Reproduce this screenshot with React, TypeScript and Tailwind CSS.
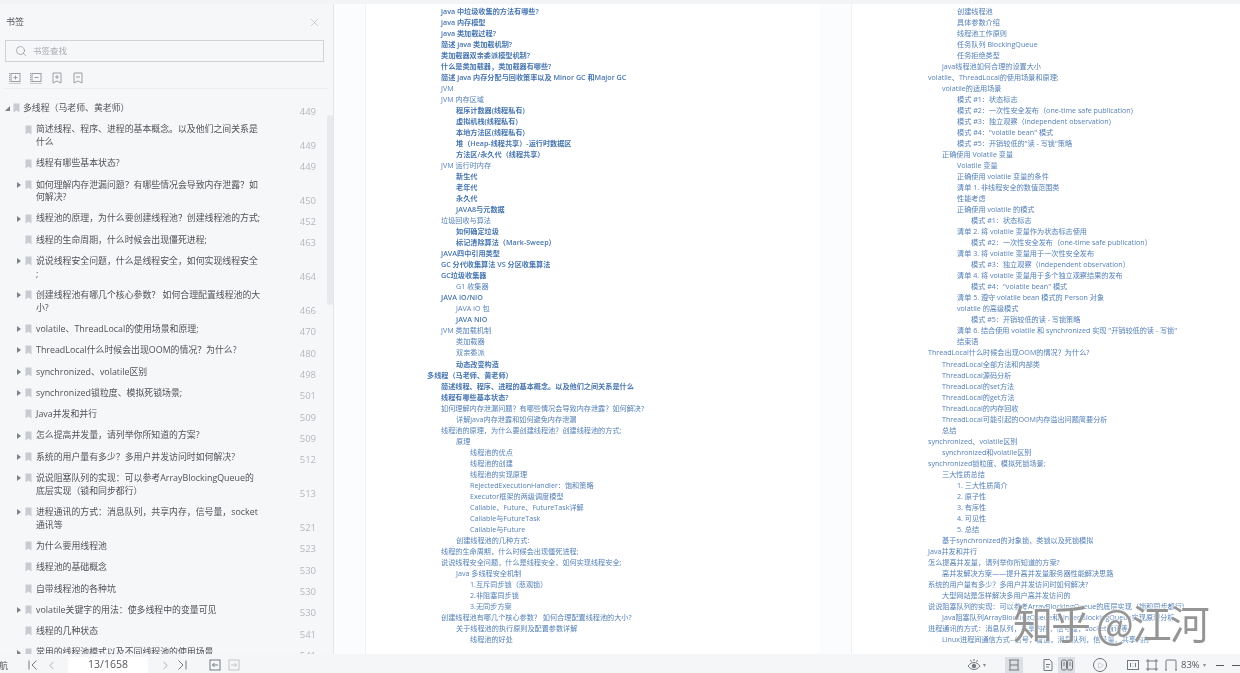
import React from "react";
import { ChevronLeft, ChevronRight, Play, Search, X } from "lucide-react";

const cjk = "font-['Open_Sans','Noto_Sans_CJK_SC',sans-serif]";

type Line = [number, string, boolean?];

const pageOne: Line[] = [
    [1, "java 中垃圾收集的方法有哪些?", true],
    [1, "java 内存模型", true],
    [1, "java 类加载过程?", true],
    [1, "简述 java 类加载机制?", true],
    [1, "类加载器双亲委派模型机制?", true],
    [1, "什么是类加载器，类加载器有哪些?", true],
    [1, "简述 java 内存分配与回收策率以及 Minor GC 和Major GC", true],
    [1, "JVM"],
    [1, "JVM 内存区域"],
    [2, "程序计数器(线程私有)", true],
    [2, "虚拟机栈(线程私有)", true],
    [2, "本地方法区(线程私有)", true],
    [2, "堆（Heap-线程共享）-运行时数据区", true],
    [2, "方法区/永久代（线程共享）", true],
    [1, "JVM 运行时内存"],
    [2, "新生代", true],
    [2, "老年代", true],
    [2, "永久代", true],
    [2, "JAVA8与元数据", true],
    [1, "垃圾回收与算法"],
    [2, "如何确定垃圾", true],
    [2, "标记清除算法（Mark-Sweep）", true],
    [1, "JAVA四中引用类型", true],
    [1, "GC 分代收集算法 VS 分区收集算法", true],
    [1, "GC垃圾收集器", true],
    [2, "G1 收集器"],
    [1, "JAVA IO/NIO", true],
    [2, "JAVA IO 包"],
    [2, "JAVA NIO", true],
    [1, "JVM 类加载机制"],
    [2, "类加载器"],
    [2, "双亲委派"],
    [2, "动态改变构造", true],
    [0, "多线程（马老师、黄老师）", true],
    [1, "简述线程、程序、进程的基本概念。以及他们之间关系是什么", true],
    [1, "线程有哪些基本状态?", true],
    [1, "如何理解内存泄漏问题？有哪些情况会导致内存泄露？如何解决?"],
    [2, "详解java内存泄露和如何避免内存泄漏"],
    [1, "线程池的原理，为什么要创建线程池？创建线程池的方式;"],
    [2, "原理"],
    [3, "线程池的优点"],
    [3, "线程池的创建"],
    [3, "线程池的实现原理"],
    [3, "RejectedExecutionHandler：饱和策略"],
    [3, "Executor框架的两级调度模型"],
    [3, "Callable、Future、FutureTask详解"],
    [3, "Callable与FutureTask"],
    [3, "Callable与Future"],
    [2, "创建线程池的几种方式:"],
    [1, "线程的生命周期，什么时候会出现僵死进程;"],
    [1, "说说线程安全问题，什么是线程安全，如何实现线程安全;"],
    [2, "Java 多线程安全机制"],
    [3, "1.互斥同步锁（悲观锁）"],
    [3, "2.非阻塞同步锁"],
    [3, "3.无同步方案"],
    [1, "创建线程池有哪几个核心参数？ 如何合理配置线程池的大小?"],
    [2, "关于线程池的执行原则及配置参数详解"],
    [3, "线程池的好处"],
];

const pageTwo: Line[] = [
    [2, "创建线程池"],
    [2, "具体参数介绍"],
    [2, "线程池工作原则"],
    [2, "任务队列 BlockingQueue"],
    [2, "任务拒绝类型"],
    [1, "java线程池如何合理的设置大小"],
    [0, "volatile、ThreadLocal的使用场景和原理;"],
    [1, "volatile的适用场景"],
    [2, "模式 #1：状态标志"],
    [2, "模式 #2：一次性安全发布（one-time safe publication)"],
    [2, "模式 #3：独立观察（independent observation)"],
    [2, "模式 #4：\"volatile bean\" 模式"],
    [2, "模式 #5：开销较低的\"读 - 写锁\"策略"],
    [1, "正确使用 Volatile 变量"],
    [2, "Volatile 变量"],
    [2, "正确使用 volatile 变量的条件"],
    [2, "清单 1. 非线程安全的数值范围类"],
    [2, "性能考虑"],
    [2, "正确使用 volatile 的模式"],
    [3, "模式 #1：状态标志"],
    [2, "清单 2. 将 volatile 变量作为状态标志使用"],
    [3, "模式 #2：一次性安全发布（one-time safe publication）"],
    [2, "清单 3. 将 volatile 变量用于一次性安全发布"],
    [3, "模式 #3：独立观察（independent observation）"],
    [2, "清单 4. 将 volatile 变量用于多个独立观察结果的发布"],
    [3, "模式 #4：\"volatile bean\" 模式"],
    [2, "清单 5. 遵守 volatile bean 模式的 Person 对象"],
    [2, "volatile 的高级模式"],
    [3, "模式 #5：开销较低的读 - 写锁策略"],
    [2, "清单 6. 结合使用 volatile 和 synchronized 实现 \"开销较低的读 - 写锁\""],
    [2, "结束语"],
    [0, "ThreadLocal什么时候会出现OOM的情况？为什么?"],
    [1, "ThreadLocal全部方法和内部类"],
    [1, "ThreadLocal源码分析"],
    [1, "ThreadLocal的set方法"],
    [1, "ThreadLocal的get方法"],
    [1, "ThreadLocal的内存回收"],
    [1, "ThreadLocal可能引起的OOM内存溢出问题简要分析"],
    [1, "总结"],
    [0, "synchronized、volatile区别"],
    [1, "synchronized和volatile区别"],
    [0, "synchronized锁粒度、模拟死锁场景;"],
    [1, "三大性质总结"],
    [2, "1. 三大性质简介"],
    [2, "2. 原子性"],
    [2, "3. 有序性"],
    [2, "4. 可见性"],
    [2, "5. 总结"],
    [1, "基于synchronized的对象锁，类锁以及死锁模拟"],
    [0, "Java并发和并行"],
    [0, "怎么提高并发量，请列举你所知道的方案?"],
    [1, "高并发解决方案——提升高并发量服务器性能解决思路"],
    [0, "系统的用户量有多少？多用户并发访问时如何解决?"],
    [1, "大型网站是怎样解决多用户高并发访问的"],
    [0, "说说阻塞队列的实现：可以参考ArrayBlockingQueue的底层实现（锁和同步都行）"],
    [1, "Java阻塞队列ArrayBlockingQueue和LinkedBlockingQueue实现原理分析"],
    [0, "进程通讯的方式：消息队列，共享内存，信号量，socket通讯等"],
    [1, "Linux进程间通信方式--信号，管道，消息队列，信号量，共享内存"],
];

const indents = ["pl-0", "pl-[14px]", "pl-[29px]", "pl-[43px]"];

type Mark = { text: string; page: number; arrow?: boolean; level?: number };

const bookmarks: Mark[] = [
    { text: "多线程（马老师、黄老师）", page: 449, arrow: true, level: 0 },
    { text: "简述线程、程序、进程的基本概念。以及他们之间关系是什么", page: 449 },
    { text: "线程有哪些基本状态?", page: 449 },
    { text: "如何理解内存泄漏问题？有哪些情况会导致内存泄露？如何解决?", page: 450, arrow: true },
    { text: "线程池的原理，为什么要创建线程池？创建线程池的方式;", page: 452, arrow: true },
    { text: "线程的生命周期，什么时候会出现僵死进程;", page: 463 },
    { text: "说说线程安全问题，什么是线程安全，如何实现线程安全\n;", page: 464, arrow: true },
    { text: "创建线程池有哪几个核心参数？ 如何合理配置线程池的大小?", page: 466, arrow: true },
    { text: "volatile、ThreadLocal的使用场景和原理;", page: 470, arrow: true },
    { text: "ThreadLocal什么时候会出现OOM的情况？为什么?", page: 480, arrow: true },
    { text: "synchronized、volatile区别", page: 498, arrow: true },
    { text: "synchronized锁粒度、模拟死锁场景;", page: 501, arrow: true },
    { text: "Java并发和并行", page: 509 },
    { text: "怎么提高并发量，请列举你所知道的方案?", page: 509, arrow: true },
    { text: "系统的用户量有多少？多用户并发访问时如何解决?", page: 512, arrow: true },
    { text: "说说阻塞队列的实现：可以参考ArrayBlockingQueue的底层实现（锁和同步都行）", page: 513, arrow: true },
    { text: "进程通讯的方式：消息队列，共享内存，信号量，socket通讯等", page: 521, arrow: true },
    { text: "为什么要用线程池", page: 523 },
    { text: "线程池的基础概念", page: 530 },
    { text: "自带线程池的各种坑", page: 530 },
    { text: "volatile关键字的用法：使多线程中的变量可见", page: 530, arrow: true },
    { text: "线程的几种状态", page: 541 },
    { text: "常用的线程池模式以及不同线程池的使用场景", page: 541, arrow: true },
];

const BookmarkGlyph = () => (
    <svg width="7" height="10" viewBox="0 0 7 10" className="shrink-0">
        <path d="M0.5 0.5h6v9l-3-2-3 2z" fill="#c8ccd2" />
    </svg>
);

const ToolIcon = ({ children, className = "" }: { children: React.ReactNode; className?: string }) => (
    <svg
        width="14"
        height="14"
        viewBox="0 0 14 14"
        fill="none"
        stroke="#74797f"
        strokeWidth="1"
        className={`shrink-0 ${className}`}
    >
        {children}
    </svg>
);

const BookmarkRow = ({ mark }: { mark: Mark }) => {
    const top = mark.level === 0;
    return (
        <div className={`flex pb-[2.73px] pr-[17px] pt-[6px] ${top ? "pl-[5px]" : "pl-[17px]"}`}>
            <div className="flex h-[12.6px] w-[7px] shrink-0 items-center">
                {mark.arrow &&
                    (top ? (
                        <span className="h-0 w-0 border-b-[5px] border-l-[5px] border-b-[#7d8186] border-l-transparent" />
                    ) : (
                        <span className="h-0 w-0 border-y-[3px] border-l-[4px] border-y-transparent border-l-[#7d8186]" />
                    ))}
            </div>
            <div className="flex h-[12.6px] w-[12px] shrink-0 items-center pl-[1px]">
                <BookmarkGlyph />
            </div>
            <div
                className={`w-[225px] shrink-0 whitespace-pre-line text-[8.9px] leading-[12.6px] text-[#4f5256] ${
                    top ? "-ml-[1px] w-[237px]" : ""
                }`}
            >
                {mark.text}
            </div>
            <div className="ml-auto flex items-end text-[9.5px] leading-[11px] text-[#b4b8bd]">
                <span className="translate-y-[2px]">{mark.page}</span>
            </div>
        </div>
    );
};

const Sidebar = () => (
    <aside className={`flex h-full w-[334px] shrink-0 flex-col border-r border-[#e2e4e7] bg-[#f6f7f9] ${cjk}`}>
        <div className="flex h-[36px] shrink-0 items-center justify-between pl-[6px] pr-[12px]">
            <span className="text-[9px] text-[#55585c]">书签</span>
            <X size={13} strokeWidth={1} className="text-[#a9adb2]" />
        </div>
        <div className="ml-[5px] flex h-[22px] w-[319px] shrink-0 items-center gap-[6px] border border-[#cfd2d6] pl-[9px]">
            <Search size={12} strokeWidth={1.2} className="text-[#7d8186]" />
            <span className="text-[8.5px] text-[#a8abb0]">书签查找</span>
        </div>
        <div className="mx-[4px] flex h-[27px] shrink-0 items-center gap-[7px] border-b border-[#eceef0] pl-[4px] pt-[6px]">
            <ToolIcon className="opacity-70">
                <path d="M1.5 2v10" strokeDasharray="1 1" />
                <rect x="3" y="2.5" width="9" height="8" />
                <path d="M7.5 4.5v4M5.5 6.5h4" />
                <path d="M1.5 12.5h11" strokeDasharray="1 1" />
            </ToolIcon>
            <ToolIcon className="opacity-70">
                <path d="M1.5 2v10" strokeDasharray="1 1" />
                <rect x="3" y="2.5" width="9" height="8" />
                <path d="M5.5 6.5h4" />
                <path d="M1.5 12.5h11" strokeDasharray="1 1" />
            </ToolIcon>
            <ToolIcon className="opacity-70">
                <path d="M3 2h8v10l-4-2-4 2z" />
                <path d="M7 4v4M5 6h4" />
            </ToolIcon>
            <ToolIcon className="opacity-70">
                <path d="M3 2h8v10l-4-2-4 2z" />
                <path d="M5 6h4" />
            </ToolIcon>
        </div>
        <div className="relative min-h-0 flex-1 overflow-hidden pt-[7px]">
            {bookmarks.map((mark) => (
                <BookmarkRow key={mark.text} mark={mark} />
            ))}
            {/* 滚动条 */}
            <div className="absolute left-[327px] top-[26px] h-[190px] w-[6px] rounded-full bg-[#e7e9ec]" />
        </div>
    </aside>
);

const PdfPage = ({ lines, className }: { lines: Line[]; className: string }) => (
    <div className={`h-full shrink-0 overflow-hidden bg-white pt-[2px] text-[#5580b8] ${cjk} ${className}`}>
        {lines.map(([level, text, bold], i) => (
            <div
                key={i}
                className={`h-[11.02px] whitespace-nowrap text-[7.15px] leading-[11.02px] ${indents[level]} ${
                    bold ? "font-semibold text-[#4675b0]" : ""
                }`}
            >
                {text}
            </div>
        ))}
    </div>
);

const Gutter = () => <div className="h-full w-[32px] shrink-0 border-r border-[#eef0f2] bg-[#fbfcfd]" />;

const Footer = () => (
    <div className={`flex h-[19px] shrink-0 items-center bg-[#f5f6f8] pt-[3px] text-[#55585c] ${cjk}`}>
        <span className="w-[8px] overflow-hidden whitespace-nowrap text-[9px] leading-none" dir="rtl">
            导航
        </span>
        <ToolIcon className="ml-[18px]">
            <path d="M3 2.5v9M10.5 2.5 6 7l4.5 4.5" />
        </ToolIcon>
        <ChevronLeft size={13} strokeWidth={1} className="ml-[4.5px] shrink-0 text-[#6f747a]" />
        <div className="ml-[10.5px] flex h-[16px] w-[80px] shrink-0 items-center justify-center bg-white text-[10.5px] text-[#55585c]">
            13/1658
        </div>
        <ChevronRight size={13} strokeWidth={1} className="ml-[10.5px] shrink-0 text-[#6f747a]" />
        <ToolIcon className="ml-[3.5px]">
            <path d="M3.5 2.5 8 7l-4.5 4.5M11 2.5v9" />
        </ToolIcon>
        <ToolIcon className="ml-[19px]">
            <rect x="2" y="2" width="10" height="10" />
            <path d="M10 7H4.5M6.5 5 4.5 7l2 2" />
        </ToolIcon>
        <ToolIcon className="ml-[5px] opacity-40">
            <rect x="2" y="2" width="10" height="10" />
            <path d="M4 7h5.5M7.5 5l2 2-2 2" />
        </ToolIcon>

        <div className="ml-auto flex items-center">
            <ToolIcon>
                <path d="M1 8c2-2.500 4-3.500 6-3.500s4 1 6 3.500c-2 2.500-4 3.500-6 3.500s-4-1-6-3.500z" />
                <circle cx="7" cy="8" r="1.800" fill="#74797f" />
                <path d="M7 1v2M3.500 2l1 1.800M10.500 2l-1 1.800" />
            </ToolIcon>
            <span className="ml-[2px] w-[4px] text-[6px] text-[#8b8f94]">▾</span>
            <div className="ml-[18px] flex h-[16px] w-[18px] shrink-0 items-center justify-center bg-[#dcdfe3]">
                <ToolIcon>
                    <path d="M2 2h10M2 12h10M3 2v10M11 2v10M3 7h8" />
                </ToolIcon>
            </div>
            <ToolIcon className="ml-[18px]">
                <path d="M3 1.500h5.500l2.500 2.500v8.500H3z" />
                <path d="M5 6.500h4M5 9h3" />
            </ToolIcon>
            <div className="ml-[3px] flex h-[16px] w-[17px] shrink-0 items-center justify-center bg-[#dcdfe3]">
                <ToolIcon>
                    <rect x="1.500" y="2" width="5" height="10" rx="1.500" />
                    <rect x="7.500" y="2" width="5" height="10" rx="1.500" />
                    <path d="M3 5h2M3 7h2M9 5h2M9 7h2" />
                </ToolIcon>
            </div>
            <div className="ml-[18px] flex h-[14px] w-[14px] shrink-0 items-center justify-center rounded-full border border-[#6f747a]">
                <Play size={7} strokeWidth={1} className="text-[#6f747a]" />
            </div>
            <ToolIcon className="ml-[19px]">
                <rect x="1.500" y="2.500" width="11" height="9" />
                <path d="M4.500 5v4M9.500 5v4M7 5.500v.5M7 8v.5" />
            </ToolIcon>
            <ToolIcon className="ml-[5px]">
                <rect x="3" y="3" width="8" height="8" />
                <path d="M1 3h2V1M13 3h-2V1M1 11h2v2M13 11h-2v2" />
            </ToolIcon>
            <ToolIcon className="ml-[5px]">
                <path d="M2 12V3a1 1 0 0 1 1-1h8a1 1 0 0 1 1 1v9M1 12h2M11 12h2" />
            </ToolIcon>
            <span className="ml-[3px] w-[17px] whitespace-nowrap text-[9.5px]">83%</span>
            <span className="ml-[5px] w-[4px] text-[6px] text-[#8b8f94]">▾</span>
            <span className="ml-[9px] h-[1px] w-[8px] bg-[#55585c]" />
            <span className="ml-[8px] h-[1px] w-[8px] bg-[#55585c]" />
        </div>
    </div>
);

const App = () => (
    <div className="relative flex h-[673px] w-[1240px] flex-col overflow-hidden bg-white blur-[0.3px]">
        <div className="h-[4px] shrink-0 bg-[#f3f4f6]" />
        <div className="flex min-h-0 flex-1">
            <Sidebar />
            <Gutter />
            <PdfPage lines={pageOne} className="w-[454px] pl-[61px]" />
            <Gutter />
            <PdfPage lines={pageTwo} className="w-[388px] pl-[76px]" />
        </div>
        <Footer />
        {/* 水印 */}
        <div className="absolute left-[1013px] top-[600px] whitespace-nowrap font-['Noto_Sans_CJK_SC',sans-serif] text-[40px] leading-[44px] tracking-[-2px] text-[#8a8a8a]/90 [text-shadow:0_0_3px_#fff,0_0_3px_#fff]">
            知乎 @江河
        </div>
    </div>
);

export default App;
